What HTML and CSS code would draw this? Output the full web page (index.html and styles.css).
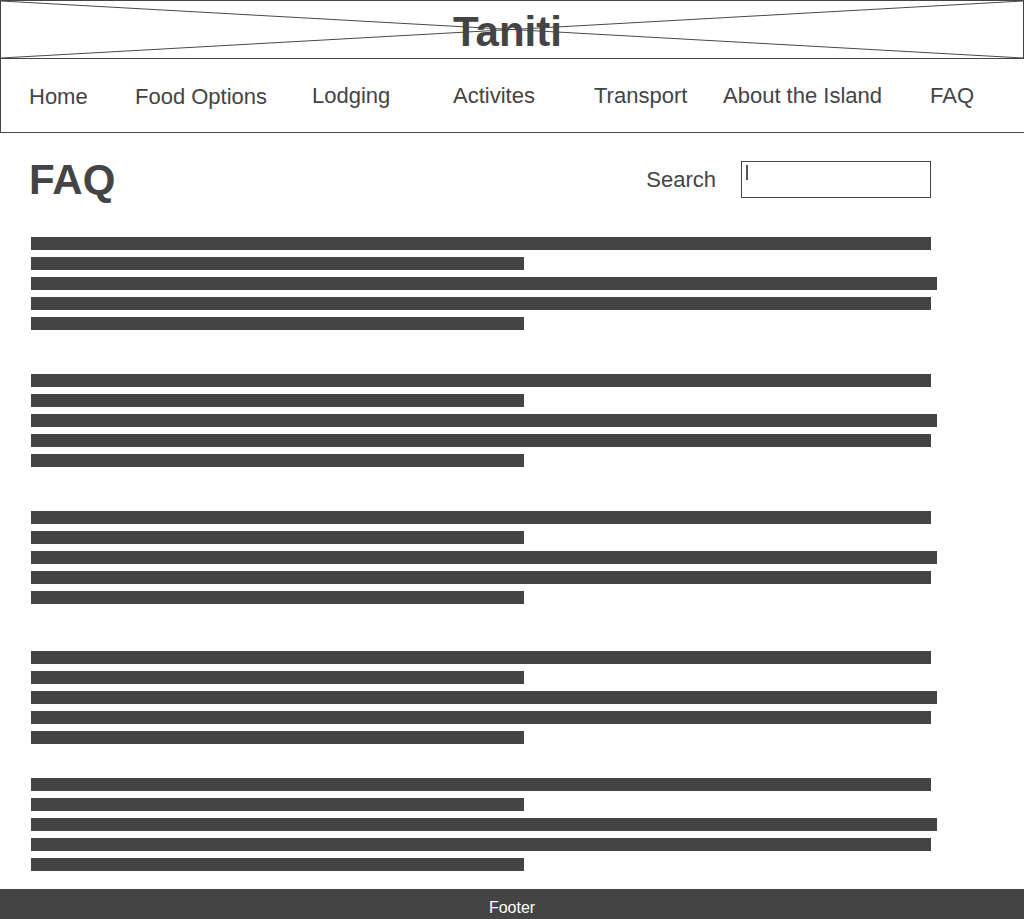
FILE: index.html
```html
<!DOCTYPE html>
<html lang="en">
<head>
<meta charset="utf-8">
<title>Taniti - FAQ</title>
<link rel="stylesheet" href="styles.css">
</head>
<body>
  <header class="site-header">
    <svg class="placeholder-x" viewBox="0 0 1024 59" preserveAspectRatio="none" aria-hidden="true">
      <line x1="0" y1="0" x2="1024" y2="59" />
      <line x1="0" y1="59" x2="1024" y2="0" />
    </svg>
    <h1 class="brand">Taniti</h1>
  </header>
  <nav class="main-nav">
    <a class="nav-link low" href="#">Home</a>
    <a class="nav-link low" href="#">Food Options</a>
    <a class="nav-link" href="#">Lodging</a>
    <a class="nav-link" href="#">Activites</a>
    <a class="nav-link" href="#">Transport</a>
    <a class="nav-link" href="#">About the Island</a>
    <a class="nav-link" href="#">FAQ</a>
  </nav>
  <main class="content">
    <div class="title-row">
      <h2 class="page-title">FAQ</h2>
      <div class="search">
        <span class="search-label">Search</span>
        <div class="search-box"><span class="caret"></span></div>
      </div>
    </div>
    <div class="faq-list">
      <section class="faq-item">
        <div class="bar w-full"></div>
        <div class="bar w-half"></div>
        <div class="bar w-wide"></div>
        <div class="bar w-full"></div>
        <div class="bar w-half"></div>
      </section>
      <section class="faq-item gap-44">
        <div class="bar w-full"></div>
        <div class="bar w-half"></div>
        <div class="bar w-wide"></div>
        <div class="bar w-full"></div>
        <div class="bar w-half"></div>
      </section>
      <section class="faq-item gap-44">
        <div class="bar w-full"></div>
        <div class="bar w-half"></div>
        <div class="bar w-wide"></div>
        <div class="bar w-full"></div>
        <div class="bar w-half"></div>
      </section>
      <section class="faq-item gap-47">
        <div class="bar w-full"></div>
        <div class="bar w-half"></div>
        <div class="bar w-wide"></div>
        <div class="bar w-full"></div>
        <div class="bar w-half"></div>
      </section>
      <section class="faq-item gap-34">
        <div class="bar w-full"></div>
        <div class="bar w-half"></div>
        <div class="bar w-wide"></div>
        <div class="bar w-full"></div>
        <div class="bar w-half"></div>
      </section>
    </div>
  </main>
  <footer class="site-footer">Footer</footer>
</body>
</html>
```

FILE: styles.css
```css
* { box-sizing: border-box; }

html, body {
  margin: 0;
  padding: 0;
  background: #ffffff;
}

body {
  font-family: "Liberation Sans", Arial, sans-serif;
  color: #444444;
  width: 1024px;
}

.site-header {
  position: relative;
  height: 59px;
  border: 1px solid #444444;
  padding: 7px 9px 0 0;
  text-align: center;
}

.placeholder-x {
  position: absolute;
  top: 0;
  left: 0;
  width: 100%;
  height: 100%;
}

.placeholder-x line {
  stroke: #444444;
  stroke-width: 1;
}

.brand {
  position: relative;
  margin: 0;
  font-size: 42px;
  font-weight: bold;
  line-height: 47px;
  color: #444444;
}

.main-nav {
  display: grid;
  grid-template-columns: 106px 177px 141px 141px 129px 207px auto;
  align-items: center;
  height: 74px;
  padding-left: 28px;
  border-left: 1px solid #444444;
  border-bottom: 1px solid #444444;
}

.nav-link {
  font-size: 22px;
  color: #444444;
  text-decoration: none;
  white-space: nowrap;
}

.nav-link.low {
  padding-top: 2px;
}

.content {
  padding: 24px 93px 0 29px;
}

.title-row {
  display: flex;
  align-items: center;
  justify-content: space-between;
}

.page-title {
  margin: 0;
  font-size: 42px;
  font-weight: bold;
  line-height: 46px;
}

.search {
  display: flex;
  align-items: center;
  gap: 25px;
}

.search-label {
  font-size: 22px;
}

.search-box {
  width: 190px;
  height: 37px;
  margin-bottom: 2px;
  border: 1px solid #444444;
  padding: 3px 0 0 4px;
}

.caret {
  display: block;
  width: 2px;
  height: 15px;
  background: #555555;
}

.faq-list {
  margin-top: 34px;
  padding-left: 2px;
}

.faq-item {
  display: flex;
  flex-direction: column;
  gap: 7px;
}

.gap-44 { margin-top: 44px; }
.gap-47 { margin-top: 47px; }
.gap-34 { margin-top: 34px; }

.bar {
  height: 13px;
  background: #444444;
}

.w-full { width: 900px; }
.w-half { width: 493px; }
.w-wide { width: 906px; }

.site-footer {
  margin-top: 18px;
  height: 30px;
  background: #444444;
  color: #ffffff;
  text-align: center;
  font-size: 16px;
  padding-top: 10px;
  line-height: 18px;
}
```
